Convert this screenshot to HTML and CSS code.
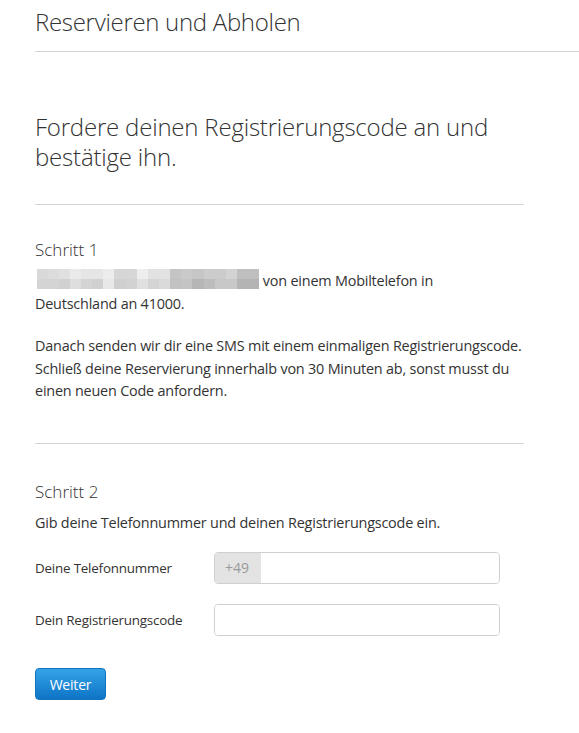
FILE: index.html
```html
<!DOCTYPE html>
<html lang="de">
<head>
<meta charset="utf-8">
<title>Reservieren und Abholen</title>
<link rel="stylesheet" href="styles.css">
</head>
<body>
<header class="top">
  <h1 class="brand">Reservieren und Abholen</h1>
</header>
<main class="content">
  <h2 class="title">Fordere deinen Registrierungscode an und bestätige ihn.</h2>
  <section class="step">
    <h3 class="step-title">Schritt 1</h3>
    <p class="text first"><span class="mosaic"><span class="mrow"><i style="background:#d9d9d9"></i><i style="background:#dcdcdc"></i><i style="background:#e0e0e0"></i><i style="background:#eaeaea"></i><i style="background:#e5e5e5"></i><i style="background:#e5e5e5"></i><i style="background:#ececec"></i><i style="background:#d6d6d6"></i><i style="background:#d6d6d6"></i><i style="background:#eeeeee"></i><i style="background:#e2e2e2"></i><i style="background:#e2e2e2"></i><i style="background:#c4c4c4"></i><i style="background:#cacaca"></i><i style="background:#c6c6c6"></i><i style="background:#cccccc"></i><i style="background:#cbcbcb"></i><i style="background:#d3d3d3"></i><i style="background:#bfbfbf"></i><i style="background:#bfbfbf"></i></span><span class="mrow"><i style="background:#d4d4d4"></i><i style="background:#d4d4d4"></i><i style="background:#d0d0d0"></i><i style="background:#dedede"></i><i style="background:#d4d4d4"></i><i style="background:#d0d0d0"></i><i style="background:#e8e8e8"></i><i style="background:#cfcfcf"></i><i style="background:#d2d2d2"></i><i style="background:#e0e0e0"></i><i style="background:#d4d4d4"></i><i style="background:#dadada"></i><i style="background:#c2c2c2"></i><i style="background:#c4c4c4"></i><i style="background:#b6b6b6"></i><i style="background:#bdbdbd"></i><i style="background:#c8c8c8"></i><i style="background:#c8c8c8"></i><i style="background:#b4b4b4"></i><i style="background:#b4b4b4"></i></span></span> von einem Mobiltelefon in<br>Deutschland an 41000.</p>
    <p class="text">Danach senden wir dir eine SMS mit einem einmaligen Registrierungscode. Schließ deine Reservierung innerhalb von 30 Minuten ab, sonst musst du einen neuen Code anfordern.</p>
  </section>
  <section class="step step2">
    <h3 class="step-title">Schritt 2</h3>
    <p class="text">Gib deine Telefonnummer und deinen Registrierungscode ein.</p>
    <form class="form">
      <div class="row">
        <label class="label">Deine Telefonnummer</label>
        <div class="field">
          <span class="prefix">+49</span>
          <input class="input" type="text">
        </div>
      </div>
      <div class="row">
        <label class="label">Dein Registrierungscode</label>
        <div class="field">
          <input class="input" type="text">
        </div>
      </div>
      <button class="btn" type="button">Weiter</button>
    </form>
  </section>
</main>
</body>
</html>
```
FILE: styles.css
```css
* { box-sizing: border-box; }
html, body { margin: 0; padding: 0; background: #fff; }
body {
  font-family: "Open Sans", "Liberation Sans", sans-serif;
  color: #333;
}
.top {
  margin-left: 35px;
  border-bottom: 1px solid #d6d6d6;
  height: 52px;
}
.brand {
  margin: 0;
  padding-top: 5px;
  font-size: 24px;
  font-weight: 300;
  line-height: 34px;
  color: #333;
  letter-spacing: -0.3px;
}
.content {
  margin-left: 35px;
  width: 489px;
}
.title {
  margin: 0;
  padding-top: 60px;
  padding-bottom: 32px;
  font-size: 24px;
  font-weight: 300;
  line-height: 30px;
  letter-spacing: -0.2px;
  border-bottom: 1px solid #d6d6d6;
}
.step {
  padding-top: 33px;
  padding-bottom: 40px;
  border-bottom: 1px solid #d6d6d6;
}
.step2 { border-bottom: none; padding-top: 36px; }
.step-title {
  margin: 0 0 8px;
  font-size: 17px;
  font-weight: 300;
  line-height: 24px;
}
.text {
  margin: 0 0 20px;
  font-size: 14.4px;
  line-height: 22.5px;
  letter-spacing: -0.2px;
}
.text:last-child { margin-bottom: 0; }
.step2 .text { margin-bottom: 18px; }
.mosaic {
  display: inline-flex;
  flex-direction: column;
  vertical-align: top;
  margin-top: -1px;
  margin-left: 1.5px;
}
.mrow { display: flex; }
.mrow i { display: block; width: 11.15px; height: 10px; }
.form { display: flex; flex-direction: column; }
.row {
  display: flex;
  align-items: center;
  margin-bottom: 20px;
}
.label {
  width: 179px;
  font-size: 13.4px;
  letter-spacing: -0.2px;
}
.field {
  display: flex;
  width: 286px;
  height: 32px;
  border: 1px solid #cfcfcf;
  border-radius: 4px;
  overflow: hidden;
}
.prefix {
  width: 46px;
  background: #e3e3e3;
  color: #999;
  font-size: 14px;
  line-height: 30px;
  padding-left: 10px;
}
.input {
  flex: 1;
  border: none;
  outline: none;
  margin: 0;
  padding: 0 8px;
  font: inherit;
}
.btn {
  align-self: flex-start;
  margin-top: 12px;
  width: 71px;
  height: 32px;
  border: 1px solid #1373bd;
  border-radius: 4px;
  background: linear-gradient(#35a3e8, #0d74c6);
  color: #fff;
  font-family: inherit;
  font-size: 14px;
  letter-spacing: -0.2px;
  padding: 0;
}
```
